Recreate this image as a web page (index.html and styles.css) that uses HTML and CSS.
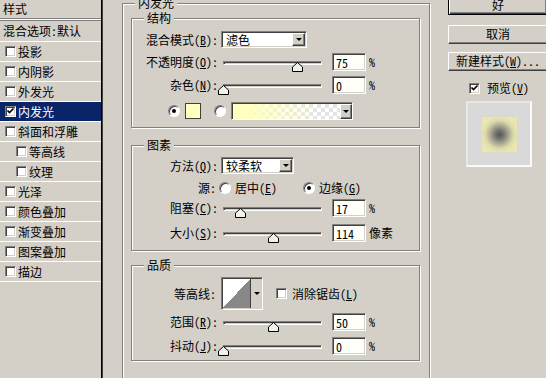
FILE: index.html
```html
<!DOCTYPE html>
<html lang="zh-CN">
<head>
  <meta charset="UTF-8">
  <title>图层样式 - 内发光</title>
  <link rel="stylesheet" href="styles.css">
</head>
<body>
<div class="dialog">

  <!-- left: list of effects -->
  <div class="styles-list">
    <div class="list-head">样式</div>
    <div class="list-sep"></div>
    <div class="item item-blend">混合选项:默认</div>
    <div class="item"><span class="chk"></span><span class="item-text">投影</span></div>
    <div class="item"><span class="chk"></span><span class="item-text">内阴影</span></div>
    <div class="item"><span class="chk"></span><span class="item-text">外发光</span></div>
    <div class="item selected"><span class="chk"><svg class="tick" viewBox="0 0 9 9"><path d="M1.5 3.5 L3.5 5.5 L7.5 1.5"/></svg></span><span class="item-text">内发光</span></div>
    <div class="item"><span class="chk"></span><span class="item-text">斜面和浮雕</span></div>
    <div class="item sub"><span class="chk"></span><span class="item-text">等高线</span></div>
    <div class="item sub"><span class="chk"></span><span class="item-text">纹理</span></div>
    <div class="item"><span class="chk"></span><span class="item-text">光泽</span></div>
    <div class="item"><span class="chk"></span><span class="item-text">颜色叠加</span></div>
    <div class="item"><span class="chk"></span><span class="item-text">渐变叠加</span></div>
    <div class="item"><span class="chk"></span><span class="item-text">图案叠加</span></div>
    <div class="item"><span class="chk"></span><span class="item-text">描边</span></div>
  </div>

  <!-- middle: inner glow settings -->
  <div class="main">
    <div class="group outer">
      <span class="legend">内发光</span>

      <div class="group g-struct">
        <span class="legend">结构</span>
        <div class="row r-mode">
          <span class="lbl">混合模式(<u>B</u>):</span>
          <div class="combo w-mode"><span class="combo-text">滤色</span><span class="combo-btn"></span></div>
        </div>
        <div class="row r-gap5">
          <span class="lbl">不透明度(<u>O</u>):</span>
          <div class="slider"><div class="track"></div><svg class="thumb" style="left: 75%" viewBox="0 0 11 10"><polygon points="5.5,0.5 10.5,5 10.5,9.5 0.5,9.5 0.5,5"/></svg></div>
          <div class="num">75</div><span class="unit">%</span>
        </div>
        <div class="row r-gap5">
          <span class="lbl">杂色(<u>N</u>):</span>
          <div class="slider"><div class="track"></div><svg class="thumb" style="left: 0%" viewBox="0 0 11 10"><polygon points="5.5,0.5 10.5,5 10.5,9.5 0.5,9.5 0.5,5"/></svg></div>
          <div class="num">0</div><span class="unit">%</span>
        </div>
        <div class="row r-color">
          <span class="radio on"></span>
          <span class="swatch"></span>
          <span class="radio r2"></span>
          <div class="grad"><span class="grad-fill"></span><span class="grad-btn"></span></div>
        </div>
      </div>

      <div class="group g-elem">
        <span class="legend">图素</span>
        <div class="row r-method">
          <span class="lbl">方法(<u>Q</u>):</span>
          <div class="combo w-method"><span class="combo-text">较柔软</span><span class="combo-btn"></span></div>
        </div>
        <div class="row r-source">
          <span class="lbl lbl-src">源:</span>
          <span class="radio src1"></span><span class="opt">居中(<u>E</u>)</span>
          <span class="radio on src2"></span><span class="opt">边缘(<u>G</u>)</span>
        </div>
        <div class="row r-gap4">
          <span class="lbl">阻塞(<u>C</u>):</span>
          <div class="slider"><div class="track"></div><svg class="thumb" style="left: 17%" viewBox="0 0 11 10"><polygon points="5.5,0.5 10.5,5 10.5,9.5 0.5,9.5 0.5,5"/></svg></div>
          <div class="num">17</div><span class="unit">%</span>
        </div>
        <div class="row r-gap7">
          <span class="lbl">大小(<u>S</u>):</span>
          <div class="slider"><div class="track"></div><svg class="thumb" style="left: 50%" viewBox="0 0 11 10"><polygon points="5.5,0.5 10.5,5 10.5,9.5 0.5,9.5 0.5,5"/></svg></div>
          <div class="num">114</div><span class="unit">像素</span>
        </div>
      </div>

      <div class="group g-quality">
        <span class="legend">品质</span>
        <div class="row r-contour">
          <span class="lbl lbl-contour">等高线:</span>
          <div class="contour"><span class="contour-img"></span><span class="contour-drop"></span></div>
          <span class="chk aa"></span><span class="opt">消除锯齿(<u>L</u>)</span>
        </div>
        <div class="row r-gap3">
          <span class="lbl">范围(<u>R</u>):</span>
          <div class="slider"><div class="track"></div><svg class="thumb" style="left: 50%" viewBox="0 0 11 10"><polygon points="5.5,0.5 10.5,5 10.5,9.5 0.5,9.5 0.5,5"/></svg></div>
          <div class="num">50</div><span class="unit">%</span>
        </div>
        <div class="row r-gap6">
          <span class="lbl">抖动(<u>J</u>):</span>
          <div class="slider"><div class="track"></div><svg class="thumb" style="left: 0%" viewBox="0 0 11 10"><polygon points="5.5,0.5 10.5,5 10.5,9.5 0.5,9.5 0.5,5"/></svg></div>
          <div class="num">0</div><span class="unit">%</span>
        </div>
      </div>
    </div>
  </div>

  <!-- right: buttons and preview -->
  <div class="side">
    <div class="btn btn-ok">好</div>
    <div class="btn btn-cancel">取消</div>
    <div class="btn btn-new">新建样式(<u>W</u>)...</div>
    <div class="preview-chk"><span class="chk"><svg class="tick" viewBox="0 0 9 9"><path d="M1.5 3.5 L3.5 5.5 L7.5 1.5"/></svg></span><span class="opt">预览(<u>V</u>)</span></div>
    <div class="preview"><span class="preview-swatch"></span></div>
  </div>

</div>
</body>
</html>
```

FILE: styles.css
```css
* {
  box-sizing: border-box;
}
body {
  margin: 0;
  width: 546px;
  height: 378px;
  overflow: hidden;
  background: #d4d0c8;
  font-family: "Noto Sans Mono CJK SC", "Noto Sans CJK SC", sans-serif;
  font-size: 12px;
  line-height: 14px;
  color: #000;
}
u {
  text-decoration: underline;
}
.dialog {
  display: flex;
  height: 378px;
}

/* effect list */
.styles-list {
  flex: none;
  width: 102px;
  border-right: 1px solid #000;
  box-shadow: 1px 0 0 #404040;
}
.list-head {
  height: 18px;
  padding: 2px 0 0 3px;
}
.list-sep {
  height: 3px;
  border-top: 1px solid #808080;
  border-bottom: 1px solid #808080;
  background: #fff;
}
.item {
  display: flex;
  align-items: center;
  height: 20px;
  padding-left: 5px;
  border-bottom: 1px solid #fff;
}
.item-blend {
  height: 21px;
  padding-left: 3px;
}
.item.sub {
  padding-left: 16px;
}
.item-text {
  margin-left: 2px;
}
.item.selected {
  background: #0a246a;
  color: #fff;
}

/* common controls */
.chk {
  flex: none;
  display: block;
  width: 11px;
  height: 11px;
  background: #fff;
  border: 1px solid;
  border-color: #808080 #fff #fff #808080;
  box-shadow: inset 1px 1px 0 #404040, inset -1px -1px 0 #d4d0c8;
}
.tick {
  display: block;
  width: 9px;
  height: 9px;
  fill: none;
  stroke: #000;
  stroke-width: 1.7;
}
.radio {
  flex: none;
  position: relative;
  width: 12px;
  height: 12px;
  border-radius: 50%;
  background: #fff;
  border: 1px solid;
  border-color: #808080 #fff #fff #808080;
  box-shadow: inset 1px 1px 0 #404040;
}
.radio.on::after {
  content: "";
  position: absolute;
  left: 3px;
  top: 3px;
  width: 4px;
  height: 4px;
  border-radius: 50%;
  background: #000;
}

/* group boxes */
.main {
  flex: none;
  width: 328px;
  padding-left: 20px;
}
.group {
  position: relative;
  border: 1px solid #808080;
  box-shadow: inset 1px 1px 0 #fff, 1px 1px 0 #fff;
}
.legend {
  position: absolute;
  top: -7px;
  left: 12px;
  padding: 0 3px;
  line-height: 12px;
  background: #d4d0c8;
}
.outer {
  margin-top: 3px;
  width: 308px;
  height: 420px;
  padding: 14px 9px 0 8px;
}
.g-struct {
  height: 110px;
}
.g-elem {
  height: 106px;
  margin-top: 17px;
}
.g-quality {
  height: 96px;
  margin-top: 14px;
}

/* rows */
.row {
  display: flex;
  align-items: center;
  height: 18px;
}
.lbl {
  flex: none;
  width: 86px;
  text-align: right;
  white-space: nowrap;
}
.lbl-src,
.lbl-contour {
  width: 84px;
  margin-right: 2px;
}
.r-mode {
  margin-top: 12px;
  height: 17px;
}
.r-gap3 { margin-top: 3px; }
.r-gap4 { margin-top: 4px; }
.r-gap5 { margin-top: 5px; }
.r-gap6 { margin-top: 6px; }
.r-gap7 { margin-top: 7px; }
.r-color {
  margin-top: 8px;
  padding-left: 36px;
}
.r-method {
  margin-top: 11px;
  height: 17px;
}
.r-source {
  margin-top: 7px;
  height: 14px;
}
.r-contour {
  margin-top: 11px;
  height: 33px;
}

/* combo box */
.combo {
  flex: none;
  display: flex;
  height: 17px;
  margin-left: 3px;
  background: #fff;
  border: 1px solid;
  border-color: #808080 #fff #fff #808080;
  box-shadow: inset 1px 1px 0 #404040, inset -1px -1px 0 #d4d0c8;
  padding: 1px;
}
.w-mode { width: 86px; }
.w-method { width: 73px; }
.combo-text {
  flex: 1;
  padding-left: 3px;
  line-height: 13px;
}
.combo-btn,
.grad-btn {
  position: relative;
  flex: none;
  width: 13px;
  background: #d4d0c8;
  border: 1px solid;
  border-color: #fff #404040 #404040 #fff;
  box-shadow: inset -1px -1px 0 #808080;
}
.combo-btn::after,
.grad-btn::after,
.contour-drop::after {
  content: "";
  position: absolute;
  left: 50%;
  top: 50%;
  margin: -2px 0 0 -3px;
  border-left: 3px solid transparent;
  border-right: 3px solid transparent;
  border-top: 3px solid #000;
}

/* sliders */
.slider {
  flex: none;
  position: relative;
  width: 99px;
  height: 18px;
  margin-left: 5px;
  padding-top: 8px;
}
.track {
  height: 4px;
  background: #d4d0c8;
  border: 1px solid;
  border-color: #808080 #fff #fff #808080;
  box-shadow: inset 1px 1px 0 #404040;
}
.thumb {
  position: absolute;
  top: 9px;
  width: 11px;
  height: 10px;
  margin-left: -5px;
  fill: #f2f1ec;
  stroke: #000;
  stroke-width: 1;
}
.num {
  flex: none;
  width: 34px;
  height: 18px;
  margin-left: 10px;
  padding: 2px 0 0 3px;
  background: #fffffa;
  border: 1px solid;
  border-color: #808080 #fff #fff #808080;
  box-shadow: inset 1px 1px 0 #404040, inset -1px -1px 0 #d4d0c8;
  line-height: 13px;
}
.unit {
  margin-left: 3px;
}

/* colour row */
.swatch {
  flex: none;
  width: 16px;
  height: 16px;
  margin-left: 5px;
  background: #ffffbe;
  border: 1px solid #404040;
}
.radio.r2 {
  margin-left: 13px;
}
.grad {
  flex: none;
  display: flex;
  width: 122px;
  height: 18px;
  margin-left: 5px;
  border: 1px solid;
  border-color: #808080 #fff #fff #808080;
  box-shadow: inset 1px 1px 0 #404040;
  padding: 1px 0 0 1px;
}
.grad-fill {
  flex: 1;
  background:
    linear-gradient(to right, #ffffc0 0%, #ffffc0 12%, rgba(255, 255, 192, 0) 80%),
    repeating-conic-gradient(#e4e4e4 0 25%, #fff 0 50%) 0 0 / 8px 8px;
}
.grad-btn {
  width: 12px;
}

/* source row */
.src1 {
  margin-left: 1px;
}
.src2 {
  margin-left: 26px;
}
.opt {
  margin-left: 4px;
  white-space: nowrap;
}

/* contour */
.contour {
  flex: none;
  display: flex;
  width: 42px;
  height: 33px;
  margin-left: 3px;
  border: 1px solid;
  border-color: #808080 #fff #fff #808080;
  box-shadow: inset 1px 1px 0 #404040;
  padding: 1px 0 1px 1px;
}
.contour-img {
  width: 28px;
  background: linear-gradient(to bottom right, #fff 50%, #888 50%);
  border-right: 1px solid #404040;
}
.contour-drop {
  position: relative;
  flex: 1;
}
.chk.aa {
  margin-left: 13px;
}
.chk.aa + .opt {
  margin-left: 5px;
}

/* right column */
.side {
  flex: none;
  width: 100px;
  margin-left: 18px;
  display: flex;
  flex-direction: column;
}
.btn {
  height: 19px;
  text-align: center;
  line-height: 15px;
  background: #d4d0c8;
  border: 1px solid;
  border-color: #fff #404040 #404040 #fff;
  box-shadow: inset -1px -1px 0 #808080;
  white-space: nowrap;
}
.btn-ok {
  margin-top: -4px;
  border-color: #000;
  box-shadow: inset 1px 1px 0 #fff, inset -1px -1px 0 #404040, inset -2px -2px 0 #808080;
}
.btn-cancel {
  margin-top: 10px;
}
.btn-new {
  margin-top: 8px;
}
.preview-chk {
  display: flex;
  align-items: center;
  height: 12px;
  margin-top: 11px;
  padding-left: 21px;
}
.preview-chk .opt {
  margin-left: 7px;
}
.preview {
  display: flex;
  align-items: center;
  justify-content: center;
  width: 66px;
  height: 66px;
  margin: 7px 0 0 18px;
  background: #d9d9d9;
  border: 2px solid;
  border-color: #e8e8e8 #fafafa #fafafa #e8e8e8;
}
.preview-swatch {
  width: 35px;
  height: 35px;
  background: radial-gradient(circle, #555 0, #727270 4px, #a8a690 9px, #dcd9aa 14px, #e9e6b4 18px);
  box-shadow: 0 0 2px #dedbb0;
}
```
